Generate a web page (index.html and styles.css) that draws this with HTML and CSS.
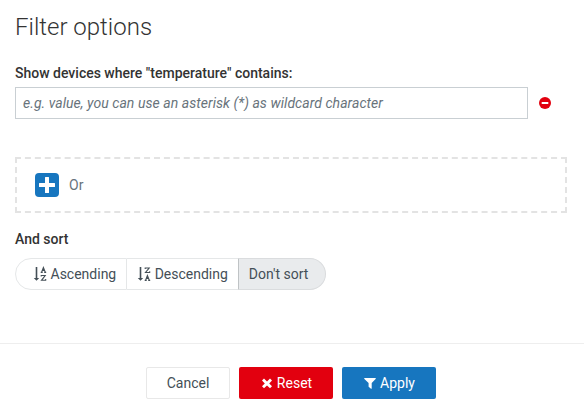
FILE: index.html
```
<!DOCTYPE html>
<html lang="en">
<head>
<meta charset="utf-8">
<title>Filter options</title>
<link rel="stylesheet" href="styles.css">
</head>
<body>
<main class="content">
  <h1 class="title">Filter options</h1>
  <label class="label" for="filter">Show devices where "temperature" contains:</label>
  <div class="filter-row">
    <input class="input" id="filter" type="text" placeholder="e.g. value, you can use an asterisk (*) as wildcard character">
    <svg class="remove" viewBox="0 0 12 12"><circle cx="6" cy="6" r="6" fill="#e2000f"/><path d="M2.700 5h6.600v2H2.700z" fill="#fff"/></svg>
  </div>
  <div class="or-box">
    <svg class="plus" viewBox="0 0 24 24"><rect width="24" height="24" rx="4" fill="#1776bf"/><path d="M10 4.500q0-.5.500-.5h3q.5 0 .5.500V10h5.500q.5 0 .5.500v3q0 .5-.5.500H14v5.500q0 .5-.5.500h-3q-.5 0-.5-.5V14H4.500q-.5 0-.5-.5v-3q0-.5.500-.5H10z" fill="#fff"/></svg>
    <span>Or</span>
  </div>
  <div class="label sort-label">And sort</div>
  <div class="sort-group">
    <button class="sort asc"><svg class="sort-icon" viewBox="0 0 14 16"><path d="M2.700 1h1.600v11h1.900L3.500 14.800.8 12h1.900z"/><path class="letter" d="M7.700 6.400h2M11.200 6.400h2M8.700 6l1.700-4.500L12.200 6M9.200 4.500h2.500M8.200 10.500V9.500h4L8.500 14.300h4.200v-1.200"/></svg>Ascending</button>
    <button class="sort desc"><svg class="sort-icon" viewBox="0 0 14 16"><path d="M2.700 1h1.600v11h1.900L3.500 14.800.8 12h1.900z"/><path class="letter" d="M8.200 3V2h4L8.500 6.500h4.200V5.300M7.700 14.400h2M11.200 14.400h2M8.700 14l1.700-4.500L12.200 14M9.200 12.500h2.500"/></svg>Descending</button>
    <button class="sort none">Don't sort</button>
  </div>
</main>
<footer class="footer">
  <button class="btn cancel">Cancel</button>
  <button class="btn reset"><svg class="btn-icon" viewBox="0 0 12 12"><path d="M3 1.500 6 4.400l3-2.900L11 3.500 8.200 6.500 11 9.300 9 11.300 6 8.500 3 11.300 1 9.300 3.800 6.500 1 3.500z"/></svg>Reset</button>
  <button class="btn apply"><svg class="btn-icon" viewBox="0 0 12 12"><path d="M.5 1h11q.6.400.1 1L7.700 6v5.500q-.2.500-.7.200L4.600 9.800V6L.4 2q-.5-.6.100-1z"/></svg>Apply</button>
</footer>
</body>
</html>
```
FILE: styles.css
```
* { box-sizing: border-box; }
body { margin: 0; background: #fff; color: #333; font: 14px/20px Roboto, sans-serif; }
.content { height: 343px; padding: 11px 17px 0 15px; }
.title { margin: 0 0 20px; font-size: 24px; line-height: 32px; font-weight: 300; }
.label { display: block; height: 24px; font-weight: 500; }
.filter-row { display: flex; align-items: center; gap: 11px; }
.input { width: 513px; height: 32px; padding: 0 7px; border: 1px solid #c9cfd3; border-radius: 0; background: #fff; font: inherit; }
.input::placeholder { color: #68737b; font-style: italic; letter-spacing: .055px; opacity: 1; }
.remove { width: 12px; height: 12px; }
.or-box { display: flex; align-items: center; gap: 10px; height: 56px; margin-top: 38px; padding-left: 18px; border: 2px dashed #e3e3e3; color: #68737b; }
.plus { width: 24px; height: 24px; }
.sort-label { height: 29px; margin-top: 16px; }
.sort-group { display: flex; width: 311px; }
.sort { display: flex; align-items: center; height: 32px; padding: 0; border: 1px solid #e5e7e8; background: #fff; color: #444f57; font: inherit; white-space: nowrap; }
.asc { width: 112px; padding-left: 17px; border-radius: 16px 0 0 16px; }
.desc { width: 112px; padding-left: 10px; border-left: 0; border-right: 0; }
.none { width: 88px; padding-left: 9.5px; border-color: #dadcde; border-left-color: #bfc3c5; border-radius: 0 16px 16px 0; background: #e9ebed; }
.sort-icon { width: 14px; height: 16px; margin-right: 3.5px; fill: currentColor; }
.desc .sort-icon { margin-right: 4px; }
.letter { fill: none; stroke: currentColor; stroke-width: 1.1; }
.footer { display: flex; justify-content: center; gap: 9px; height: 69px; padding: 23px 2px 0 0; border-top: 1px solid #eee; }
.btn { display: flex; align-items: center; justify-content: center; gap: 4px; width: 94px; height: 32px; padding: 0; border: 0; border-radius: 2px; color: #fff; font: inherit; }
.cancel { width: 84px; border: 1px solid #e8e8e8; background: #fff; color: #444f57; }
.reset { padding-left: 1px; background: #e2000f; }
.apply { padding-left: 1px; background: #1776bf; }
.btn-icon { width: 12px; height: 12px; fill: #fff; }
```
